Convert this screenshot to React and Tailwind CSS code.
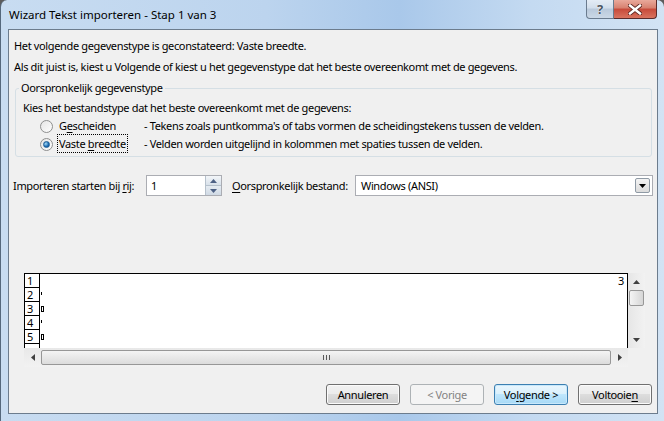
import React from 'react';

const FONT = "font-['Segoe_UI','Noto_Sans','Open_Sans',sans-serif]";

function Acc({ children }) {
  return <span className="underline underline-offset-[2px] decoration-[1px]">{children}</span>;
}

function Radio({ checked }) {
  return (
    <span className="w-[13px] h-[13px] rounded-full border border-[#8e8f8f] bg-gradient-to-br from-[#e6e6e6] to-[#fdfdfd] flex items-center justify-center shrink-0">
      {checked && (
        <span className="w-[7px] h-[7px] rounded-full bg-[radial-gradient(circle_at_35%_35%,#a6dcf7,#1b6bb3_60%,#0d4d8a)] border border-[#1d5d95]" />
      )}
    </span>
  );
}

function DialogButton({ children, variant }) {
  const base = 'w-[74px] h-[21px] rounded-[3px] border flex items-center justify-center whitespace-nowrap';
  if (variant === 'disabled') {
    return <div className={base + ' border-[#adb2b5] bg-[#f4f4f4] text-[#838383]'}>{children}</div>;
  }
  if (variant === 'default') {
    return (
      <div className={base + ' border-[#3c7fb1] bg-[linear-gradient(#eaf6fd_0%,#d9f0fc_50%,#bee6fd_50%,#a7d9f5_100%)] shadow-[inset_0_0_0_1px_#c8e8fb] text-black'}>
        {children}
      </div>
    );
  }
  return (
    <div className={base + ' border-[#707070] bg-[linear-gradient(#f2f2f2_0%,#ebebeb_50%,#dddddd_50%,#cfcfcf_100%)] shadow-[inset_0_0_0_1px_#fbfbfb] text-black'}>
      {children}
    </div>
  );
}

export default function App() {
  const rows = [1, 2, 3, 4, 5];
  return (
    <div className={`w-[664px] h-[421px] bg-[#5c5c5c] ${FONT}`}>
      <div className="w-full h-full flex flex-col rounded-t-[7px] border-l border-[#55687c] bg-[linear-gradient(90deg,#c8dcf1_0%,#bcd4ee_40%,#a9c8ea_60%,#c4daf1_80%,#d2e3f4_100%)]">
        {/* Title bar */}
        <div className="h-[29px] shrink-0 flex items-start">
          <div className="pl-[8px] pt-[7px] text-[11.5px] leading-[16px] text-black whitespace-nowrap">
            Wizard Tekst importeren - Stap 1 van 3
          </div>
          <div className="ml-auto mr-[7px] flex">
            <div className="w-[28px] h-[19px] rounded-bl-[4px] border border-t-0 border-[#6a7b8e] bg-[linear-gradient(#e4ecf5_0%,#d2deeb_45%,#b9c9db_50%,#cbd8e6_100%)] flex items-center justify-center">
              <span className="text-[13px] leading-none font-bold text-[#4a5561] [text-shadow:0_0_1px_#fff,0_0_1px_#fff]">?</span>
            </div>
            <div className="w-[43px] h-[19px] rounded-br-[4px] border border-t-0 border-l-0 border-[#5a2b2b] bg-[linear-gradient(#e9a99b_0%,#d7806f_45%,#c74a3a_50%,#d9735f_100%)] flex items-center justify-center">
              <svg width="14" height="11" viewBox="0 0 14 11">
                <path d="M2 1.5 L12 9.5 M12 1.5 L2 9.5" stroke="#5c2620" strokeWidth="4.2" strokeLinecap="square" />
                <path d="M2 1.5 L12 9.5 M12 1.5 L2 9.5" stroke="#ffffff" strokeWidth="2.4" strokeLinecap="square" />
              </svg>
            </div>
          </div>
        </div>

        {/* Client area */}
        <div className="flex-1 ml-[7px] mr-[6px] border border-[#6c7c8d] bg-[#f0f0f0] flex flex-col text-[11px] tracking-[-0.35px] leading-[16px] text-black whitespace-nowrap">
          <div className="pl-[5px] pt-[8px]">Het volgende gegevenstype is geconstateerd: Vaste breedte.</div>
          <div className="pl-[5px] mt-[5px]">Als dit juist is, kiest u Volgende of kiest u het gegevenstype dat het beste overeenkomt met de gegevens.</div>

          <fieldset className="ml-[6px] mr-[5px] mt-[5px] border border-[#d5dfe5] rounded-[3px] pl-[7px] pb-[3px]">
            <legend className="ml-[-4px] px-[2px]">Oorspronkelijk gegevenstype</legend>
            <div className="mt-[4px]">Kies het bestandstype dat het beste overeenkomt met de gegevens:</div>
            <div className="mt-[1px] h-[18px] flex items-center">
              <span className="ml-[17px]"><Radio /></span>
              <span className="ml-[4px] w-[87px] shrink-0">
                <span className="border border-transparent px-[1px]">G<Acc>e</Acc>scheiden</span>
              </span>
              <span>- Tekens zoals puntkomma's of tabs vormen de scheidingstekens tussen de velden.</span>
            </div>
            <div className="h-[18px] flex items-center">
              <span className="ml-[17px]"><Radio checked /></span>
              <span className="ml-[4px] w-[87px] shrink-0">
                <span className="border border-dotted border-black px-[1px] py-[1px]">Vaste <Acc>b</Acc>reedte</span>
              </span>
              <span>- Velden worden uitgelijnd in kolommen met spaties tussen de velden.</span>
            </div>
          </fieldset>

          {/* Start row / origin */}
          <div className="mt-[18px] h-[21px] flex items-center pl-[4px]">
            <span className="w-[133px] shrink-0">Importeren starten bij <Acc>r</Acc>ij:</span>
            <div className="w-[76px] h-[21px] border border-[#abadb3] bg-white flex">
              <span className="flex-1 pl-[4px] flex items-center">1</span>
              <div className="w-[16px] flex flex-col border-l border-[#b6c1cc]">
                <div className="flex-1 bg-[linear-gradient(#f3f6f9,#d8e1ea)] border-b border-[#b6c1cc] flex items-center justify-center">
                  <svg width="7" height="4" viewBox="0 0 7 4"><path d="M0 4 L3.5 0 L7 4 Z" fill="#4d6185" /></svg>
                </div>
                <div className="flex-1 bg-[linear-gradient(#e6ecf2,#cfd9e4)] flex items-center justify-center">
                  <svg width="7" height="4" viewBox="0 0 7 4"><path d="M0 0 L3.5 4 L7 0 Z" fill="#4d6185" /></svg>
                </div>
              </div>
            </div>
            <span className="ml-[10px] w-[123px] shrink-0"><Acc>O</Acc>orspronkelijk bestand:</span>
            <div className="w-[298px] h-[21px] border border-[#abadb3] bg-white flex items-center">
              <span className="flex-1 pl-[5px]">Windows (ANSI)</span>
              <div className="w-[15px] h-[15px] mr-[2px] rounded-[2px] border border-[#8f9aa5] bg-[linear-gradient(#f4f4f4,#dcdcdc)] flex items-center justify-center">
                <svg width="7" height="4" viewBox="0 0 7 4"><path d="M0 0 L3.5 4 L7 0 Z" fill="#000" /></svg>
              </div>
            </div>
          </div>

          {/* Preview */}
          <div className="mt-[77px] ml-[15px] flex">
            <div className="w-[604px] flex flex-col">
              <div className="h-[75px] border-t border-l border-r border-black bg-white flex">
                <div className="w-[15px] border-r border-black flex flex-col">
                  {rows.map((n) => (
                    <div key={n} className="h-[14px] border-b border-black pl-[2px] leading-[14px]">{n}</div>
                  ))}
                </div>
                <div className="flex-1 flex flex-col leading-[14px]">
                  <div className="h-[14px] flex justify-end pr-[3px] overflow-hidden">3</div>
                  <div className="h-[14px] pl-[1px]"><span className="inline-block w-[1px] h-[3px] bg-black align-top mt-[4px]" /></div>
                  <div className="h-[14px] pl-[1px]"><span className="inline-block w-[3px] h-[6px] border border-black align-top mt-[4px]" /></div>
                  <div className="h-[14px] pl-[1px]"><span className="inline-block w-[1px] h-[3px] bg-black align-top mt-[4px]" /></div>
                  <div className="h-[14px] pl-[1px]"><span className="inline-block w-[3px] h-[6px] border border-black align-top mt-[4px]" /></div>
                </div>
              </div>
              <div className="h-[19px] bg-[linear-gradient(#e8e8e8,#f2f2f2)] flex items-center">
                <div className="w-[17px] flex items-center justify-center">
                  <svg width="4" height="7" viewBox="0 0 4 7"><path d="M4 0 L0 3.5 L4 7 Z" fill="#404040" /></svg>
                </div>
                <div className="flex-1 h-[15px] rounded-[2px] border border-[#979797] bg-[linear-gradient(#f4f4f4,#dcdcdc)] flex items-center justify-center">
                  <svg width="7" height="7" viewBox="0 0 7 7"><path d="M0.5 1 V6 M3.5 1 V6 M6.5 1 V6" stroke="#5a5a5a" strokeWidth="1" /></svg>
                </div>
                <div className="w-[17px] flex items-center justify-center">
                  <svg width="4" height="7" viewBox="0 0 4 7"><path d="M0 0 L4 3.5 L0 7 Z" fill="#404040" /></svg>
                </div>
              </div>
            </div>
            <div className="w-[17px] h-[75px] bg-[linear-gradient(90deg,#e6e6e6,#f2f2f2)] flex flex-col items-center">
              <div className="h-[17px] flex items-center justify-center">
                <svg width="7" height="4" viewBox="0 0 7 4"><path d="M0 4 L3.5 0 L7 4 Z" fill="#404040" /></svg>
              </div>
              <div className="w-[15px] h-[16px] rounded-[2px] border border-[#979797] bg-[linear-gradient(90deg,#f4f4f4,#d6d6d6)]" />
              <div className="flex-1" />
              <div className="h-[17px] flex items-center justify-center">
                <svg width="7" height="4" viewBox="0 0 7 4"><path d="M0 0 L3.5 4 L7 0 Z" fill="#404040" /></svg>
              </div>
            </div>
          </div>

          {/* Buttons */}
          <div className="mt-[17px] flex justify-end gap-[10px] pr-[5px]">
            <DialogButton>Annuleren</DialogButton>
            <DialogButton variant="disabled">&lt; Vorige</DialogButton>
            <DialogButton variant="default">Vo<Acc>l</Acc>gende &gt;</DialogButton>
            <DialogButton>Voltooie<Acc>n</Acc></DialogButton>
          </div>
        </div>

        <div className="h-[7px] shrink-0" />
      </div>
    </div>
  );
}
